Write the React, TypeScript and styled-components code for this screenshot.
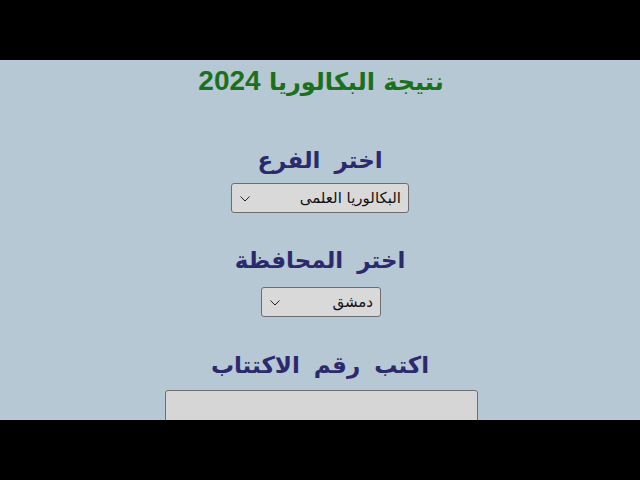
import React from "react";
import styled, { createGlobalStyle } from "styled-components";

const Global = createGlobalStyle`
  html, body { margin: 0; padding: 0; background: #000; }
  #root { width: 640px; height: 480px; }
`;

const Frame = styled.div`
  width: 640px;
  height: 480px;
  display: flex;
  flex-direction: column;
  background: #000;
`;

const Bar = styled.div`
  height: 60px;
  flex: none;
  background: #000;
`;

const Screen = styled.main`
  flex: none;
  height: 360px;
  overflow: hidden;
  background: #b5c8d4;
  display: flex;
  flex-direction: column;
  align-items: center;
  direction: rtl;
  padding-top: 4px;
  box-sizing: border-box;
`;

const Title = styled.h1`
  margin: 0;
  font-family: "DejaVu Sans", "Liberation Sans", sans-serif;
  font-weight: bold;
  font-size: 24px;
  line-height: 34px;
  color: #1b711b;
  padding-left: 2px;
  span { font-family: "Liberation Sans", sans-serif; font-size: 28px; }
`;

const Label = styled.h2<{ $top: number }>`
  margin: ${(p) => p.$top}px 0 0 0;
  font-family: "DejaVu Sans", sans-serif;
  font-weight: bold;
  font-size: 23px;
  line-height: 34px;
  color: #2c296c;
  word-spacing: 6px;
`;

const SelectWrap = styled.div<{ $w: number; $top: number }>`
  position: relative;
  width: ${(p) => p.$w}px;
  height: 30px;
  flex: none;
  margin-top: ${(p) => p.$top}px;
  margin-left: ${(p) => (p.$w < 150 ? 2 : 0)}px;
`;

const Select = styled.select`
  appearance: none;
  -webkit-appearance: none;
  width: 100%;
  height: 100%;
  box-sizing: border-box;
  background: #d9d9d9;
  border: 1px solid #6e6e6e;
  border-radius: 3px;
  font-family: "DejaVu Sans", sans-serif;
  font-size: 15px;
  color: #111;
  padding: 0 7px 0 30px;
  direction: rtl;
  outline: none;
`;

const Chevron = styled.svg`
  position: absolute;
  left: 9px;
  top: 13px;
  pointer-events: none;
`;

const Input = styled.input`
  margin-top: 8px;
  width: 313px;
  height: 34px;
  flex: none;
  box-sizing: border-box;
  background: #d6d6d6;
  border: 1px solid #6e6e6e;
  border-radius: 3px;
  margin-left: 2px;
`;

function Dropdown({ w, top, value }: { w: number; top: number; value: string }) {
  return (
    <SelectWrap $w={w} $top={top}>
      <Select defaultValue={value}>
        <option>{value}</option>
      </Select>
      <Chevron width="10" height="6" viewBox="0 0 10 6">
        <path d="M0.5 0.5 L5 5 L9.5 0.5" fill="none" stroke="#222" strokeWidth="1" />
      </Chevron>
    </SelectWrap>
  );
}

export default function App() {
  return (
    <Frame>
      <Global />
      <Bar />
      <Screen>
        <Title>
          نتيجة البكالوريا <span>2024</span>
        </Title>
        <Label $top={44}>اختر الفرع</Label>
        <Dropdown w={178} top={6} value="البكالوريا العلمى" />
        <Label $top={30}>اختر المحافظة</Label>
        <Dropdown w={120} top={10} value="دمشق" />
        <Label $top={31}>اكتب رقم الاكتتاب</Label>
        <Input type="text" />
      </Screen>
      <Bar />
    </Frame>
  );
}
